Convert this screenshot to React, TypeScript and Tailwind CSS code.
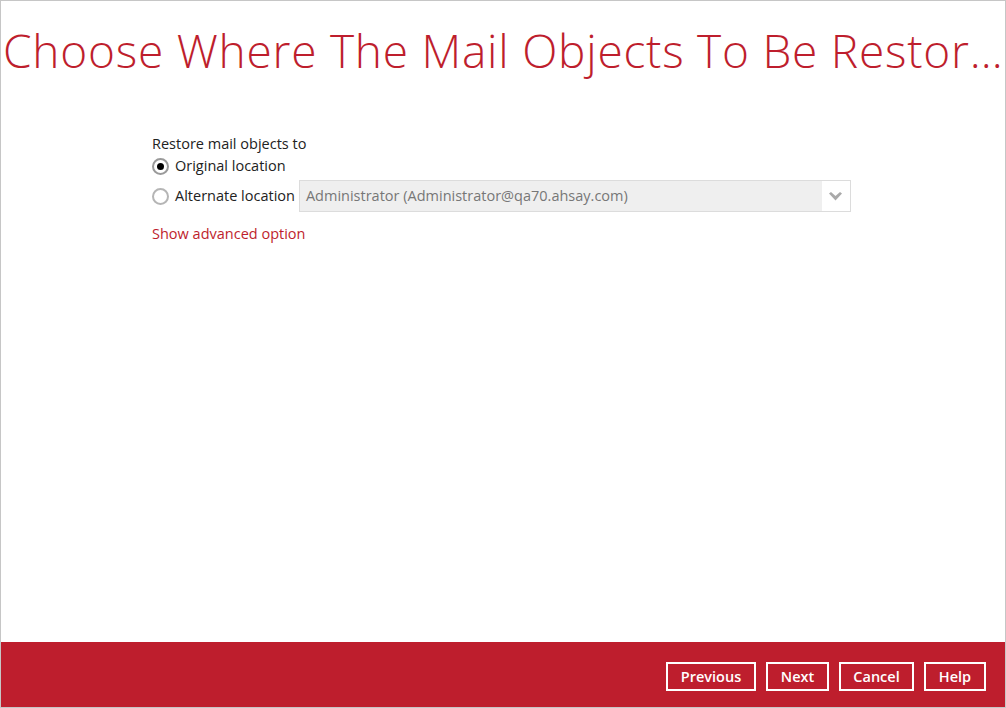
import React from "react";

export default function App() {
  return (
    <div className="w-[1006px] h-[708px] border border-[#c6c6c6] bg-white flex flex-col overflow-hidden" style={{ fontFamily: '"Open Sans", sans-serif' }}>
      <div className="pt-[26px] pl-[2px] text-[46px] leading-none font-light text-[#be1e2d] whitespace-nowrap tracking-[0.77px]">
        Choose Where The Mail Objects To Be Restor…
      </div>
      <div className="flex-1 pl-[151px] pt-[61px] text-[14.5px] text-[#222]">
        <div className="leading-[20px]">Restore mail objects to</div>
        <div className="flex items-center h-[26px] mt-[-1px]">
          <span className="w-[17px] h-[17px] rounded-full border-2 border-[#9a9a9a] flex items-center justify-center bg-white">
            <span className="w-[7px] h-[7px] rounded-full bg-black" />
          </span>
          <span className="ml-[6px]">Original location</span>
        </div>
        <div className="flex items-center h-[32px] mt-[1px]">
          <span className="w-[17px] h-[17px] rounded-full border-2 border-[#b5b5b5] bg-white" />
          <span className="ml-[6px]">Alternate location</span>
          <div className="ml-[4px] w-[552px] h-[32px] border border-[#dcdcdc] bg-[#efefef] flex items-center">
            <span className="pl-[6px] text-[#777] flex-1">Administrator (Administrator@qa70.ahsay.com)</span>
            <span className="w-[28px] h-full bg-white flex items-center justify-center">
              <svg width="13" height="9" viewBox="0 0 13 9">
                <path d="M0 1.5 L2 0 L6.5 4 L11 0 L13 1.5 L6.5 8.5 Z" fill="#a9a9a9" />
              </svg>
            </span>
          </div>
        </div>
        <div className="mt-[12px] text-[#be1e2d] leading-[20px]">Show advanced option</div>
      </div>
      <div className="h-[65px] bg-[#be1e2d] flex items-center justify-end pr-[19px] gap-[10px] pt-[4px]">
        {["Previous", "Next", "Cancel", "Help"].map((b) => (
          <button
            key={b}
            className={`h-[29px] border-2 border-white text-white text-[14.5px] font-semibold leading-none pt-[2px] ${
              b === "Previous" ? "w-[90px]" : b === "Next" ? "w-[63px]" : b === "Cancel" ? "w-[75px]" : "w-[62px]"
            }`}
          >
            {b}
          </button>
        ))}
      </div>
    </div>
  );
}
